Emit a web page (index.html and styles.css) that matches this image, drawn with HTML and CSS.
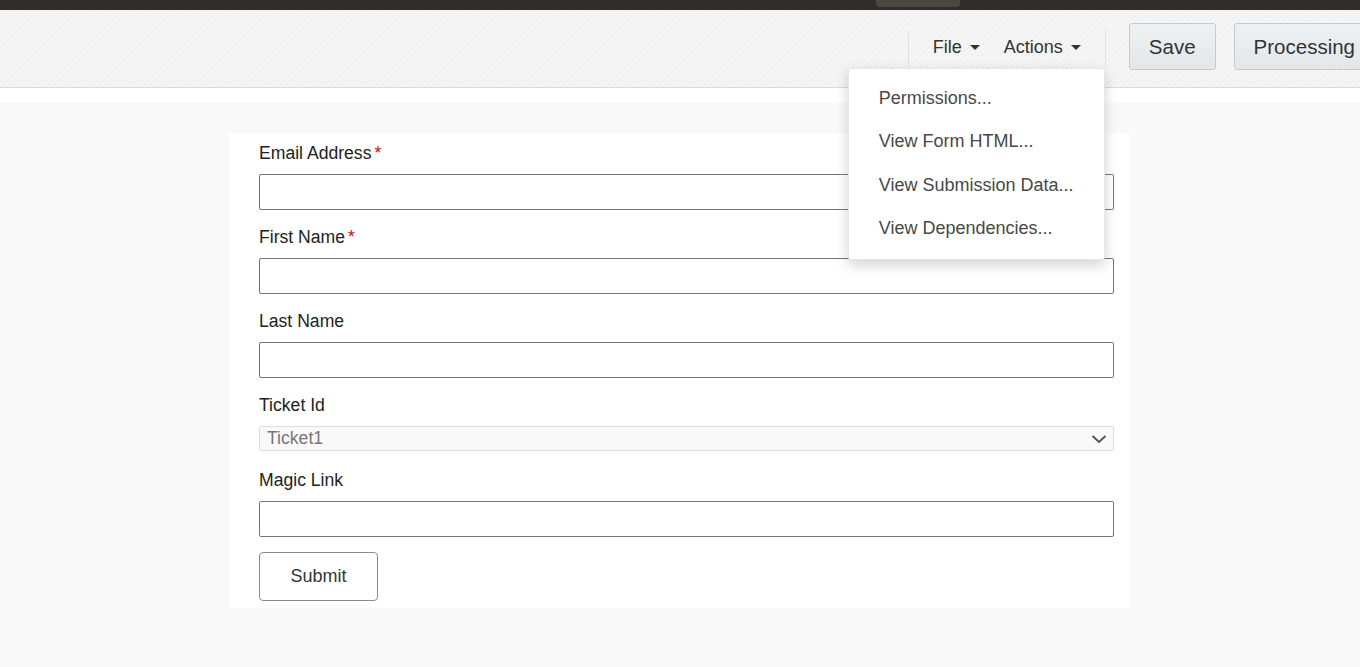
FILE: index.html
```html
<!DOCTYPE html>
<html lang="en">
<head>
  <meta charset="UTF-8" />
  <meta name="viewport" content="width=device-width, initial-scale=1.0" />
  <title>Form Designer</title>
  <link rel="stylesheet" href="styles.css">
</head>
<body>
  <div class="topbar"><span class="topbar-tab"></span></div>

  <header class="toolbar">
    <nav class="menus">
      <div class="menu">File <span class="caret"></span></div>
      <div class="menu">Actions <span class="caret"></span></div>
      <div class="dropdown">
        <a href="#">Permissions...</a>
        <a href="#">View Form HTML...</a>
        <a href="#">View Submission Data...</a>
        <a href="#">View Dependencies...</a>
      </div>
    </nav>
    <button class="tb-btn">Save</button>
    <button class="tb-btn tb-last">Processing</button>
  </header>
  <div class="strip"></div>

  <main class="page">
    <form class="card" onsubmit="return false">
      <div class="field">
        <label>Email Address<span class="req">*</span></label>
        <input type="text">
      </div>
      <div class="field">
        <label>First Name<span class="req">*</span></label>
        <input type="text">
      </div>
      <div class="field">
        <label>Last Name</label>
        <input type="text">
      </div>
      <div class="field field-select">
        <label>Ticket Id</label>
        <div class="select">
          <span>Ticket1</span>
          <svg width="16" height="10" viewBox="0 0 16 10"><path d="M1.5 2 L8 8 L14.5 2" fill="none" stroke="#555" stroke-width="2"/></svg>
        </div>
      </div>
      <div class="field">
        <label>Magic Link</label>
        <input type="text">
      </div>
      <button class="submit">Submit</button>
    </form>
  </main>
</body>
</html>
```

FILE: styles.css
```css
* {
  margin: 0;
  padding: 0;
  box-sizing: border-box;
}

body {
  font-family: 'Liberation Sans', Arial, sans-serif;
  background: #f9f9f9;
  color: #333;
  overflow: hidden;
  height: 667px;
}

.topbar {
  height: 10px;
  background: #312d2a;
  display: flex;
}

.topbar-tab {
  margin-left: 876px;
  width: 84px;
  height: 7px;
  background: #4a4642;
  border-radius: 0 0 4px 4px;
}

.toolbar {
  position: relative;
  z-index: 5;
  height: 78px;
  display: flex;
  justify-content: flex-end;
  align-items: flex-start;
  padding-top: 13px;
  background: repeating-linear-gradient(135deg, #f6f6f6 0, #f6f6f6 2px, #f1f1f1 2px, #f1f1f1 4px);
  border-bottom: 1px solid #d3dce3;
}

.menus {
  position: relative;
  display: flex;
  align-items: center;
  gap: 24px;
  height: 37px;
  margin-top: 7px;
  padding: 0 24px;
  border-left: 1px solid #dce3e8;
  border-right: 1px solid #dce3e8;
  font-size: 18px;
}

.menu {
  display: flex;
  align-items: center;
  gap: 8px;
  color: #333;
  cursor: pointer;
  margin-top: -2px;
}

.caret {
  width: 0;
  height: 0;
  border-left: 5.5px solid transparent;
  border-right: 5.5px solid transparent;
  border-top: 5.5px solid #333;
}

.dropdown {
  position: absolute;
  top: calc(100% + 1px);
  left: -61px;
  width: 257px;
  padding: 8px 0 9px;
  background: #fff;
  border: 1px solid #e3e7ea;
  border-radius: 3px;
  box-shadow: 0 5px 14px rgba(0, 0, 0, 0.18);
  z-index: 10;
}

.dropdown a {
  display: block;
  height: 43.3px;
  line-height: 43.3px;
  padding-left: 30px;
  color: #484848;
  text-decoration: none;
  font-size: 18px;
  white-space: nowrap;
}

.tb-btn {
  font-family: 'Liberation Sans', Arial, sans-serif;
  font-size: 20.5px;
  color: #333;
  height: 47px;
  padding: 0 19px;
  margin-left: 23px;
  background: linear-gradient(#eef1f3, #e3e7ea);
  border: 1px solid #c3cbd1;
  border-radius: 3px;
  flex-shrink: 0;
}

.tb-last {
  margin-left: 18px;
  margin-right: -15px;
}

.strip {
  height: 15px;
  background: #fff;
}

.page {
  padding: 30px 2px 0 0;
}

.card {
  width: 900px;
  margin: 0 auto;
  background: #fff;
  padding: 9px 15px 7px 30px;
}

.field {
  margin-bottom: 16px;
}

.field label {
  display: block;
  font-size: 17.6px;
  line-height: 22px;
  color: #222;
  margin-bottom: 10px;
}

.req {
  color: #e00;
  margin-left: 3px;
}

.field input {
  display: block;
  width: 100%;
  height: 36px;
  border: 1px solid #767676;
  border-radius: 2px;
  background: #fff;
}

.field-select {
  margin-bottom: 18px;
}

.select {
  height: 25px;
  display: flex;
  align-items: center;
  justify-content: space-between;
  padding: 0 6px 0 7px;
  background: #f9f9f9;
  border: 1px solid #ddd;
  border-radius: 2px;
  color: #777;
  font-size: 17.6px;
}

.submit {
  margin-top: -1px;
  width: 119px;
  height: 49px;
  font-family: 'Liberation Sans', Arial, sans-serif;
  font-size: 18px;
  color: #333;
  background: #fff;
  border: 1px solid #8a8a8a;
  border-radius: 4px;
}
```
